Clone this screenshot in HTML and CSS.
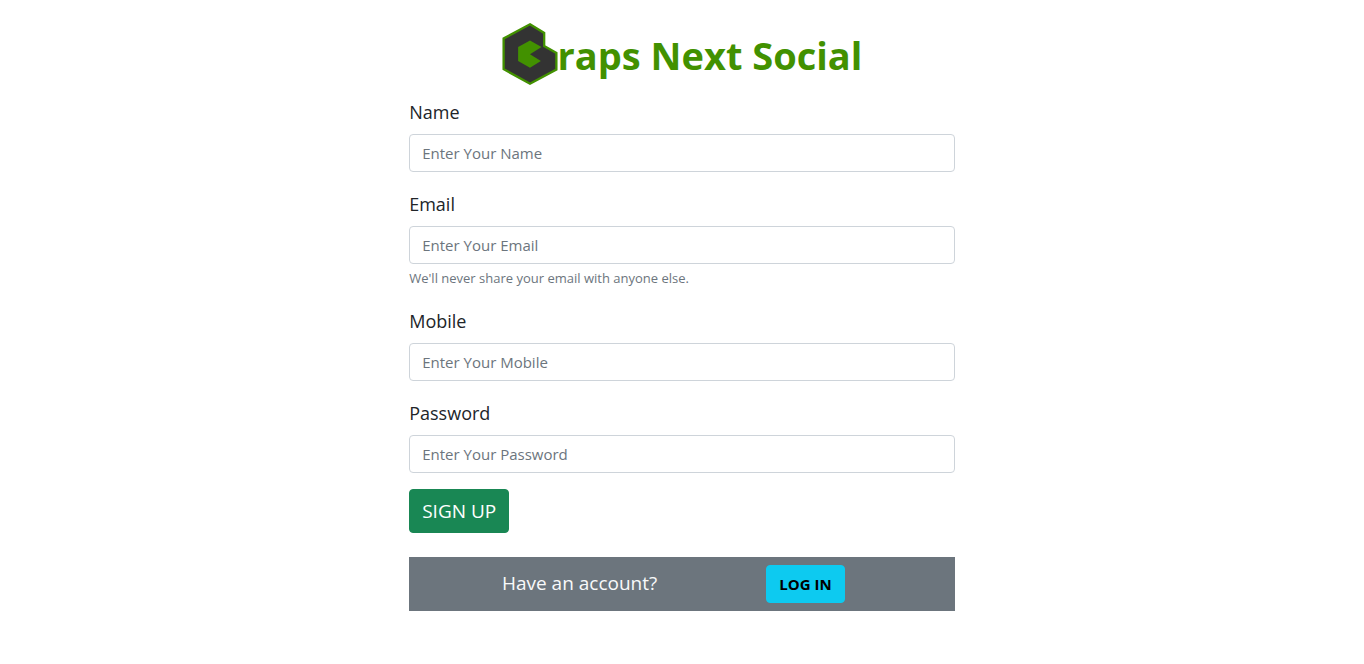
FILE: index.html
```html
<!DOCTYPE html>
<html lang="en">
<head>
  <meta charset="utf-8">
  <meta name="viewport" content="width=device-width, initial-scale=1">
  <title>Graps Next Social</title>
  <link rel="stylesheet" href="styles.css">
</head>
<body>
  <main class="signup">
    <h1 class="brand">
      <svg class="brand-logo" viewBox="24 22 166 188" role="img" aria-label="G">
        <path d="M107 26 150 52V92L187 113V163L107 206 27 162V69Z" fill="#333" stroke="#429100" stroke-width="7"/>
        <path d="M107 75 142 95 107 117 140 137 107 158 71 137V95Z" fill="#429100"/>
      </svg>
      <span class="brand-name">raps Next Social</span>
    </h1>
    <form class="form">
      <div class="field">
        <label class="label" for="name">Name</label>
        <input class="input" id="name" type="text" placeholder="Enter Your Name">
      </div>
      <div class="field">
        <label class="label" for="email">Email</label>
        <input class="input" id="email" type="email" placeholder="Enter Your Email" aria-describedby="email-help">
        <div class="help" id="email-help">We'll never share your email with anyone else.</div>
      </div>
      <div class="field">
        <label class="label" for="mobile">Mobile</label>
        <input class="input" id="mobile" type="tel" placeholder="Enter Your Mobile">
      </div>
      <div class="field">
        <label class="label" for="password">Password</label>
        <input class="input" id="password" type="password" placeholder="Enter Your Password">
      </div>
      <button class="button button-signup" type="submit">SIGN UP</button>
    </form>
    <div class="account">
      <span class="account-text">Have an account?</span>
      <button class="button button-login" type="button">LOG IN</button>
    </div>
  </main>
</body>
</html>
```
FILE: styles.css
```css
* {
  box-sizing: border-box;
}

body {
  margin: 0;
  background: #fff;
  color: #212529;
  font-family: "Open Sans", "Noto Sans", sans-serif;
  font-size: 15px;
  line-height: 24px;
}

.signup {
  width: 40%;
  min-width: 400px;
  margin: 0 auto;
  padding: 23px 0;
}

.brand {
  display: flex;
  align-items: center;
  justify-content: center;
  margin: 0 0 11px;
  color: #429100;
  font-size: 38px;
  line-height: 48px;
}

.brand-logo {
  width: 56px;
  height: 62px;
}

.brand-name {
  padding-top: 2px;
  white-space: nowrap;
}

.field {
  margin-bottom: 16px;
}

.label {
  display: block;
  margin-bottom: 6px;
  font-size: 18px;
  line-height: 32px;
}

.input {
  display: block;
  width: 100%;
  height: 38px;
  padding: 6px 12px;
  border: 1px solid #ced4da;
  border-radius: 4px;
  background: #fff;
  color: #212529;
  font: inherit;
}

.input::placeholder {
  color: #6c757d;
  opacity: 1;
}

.help {
  padding-top: 4px;
  color: #6c757d;
  font-size: 13px;
  line-height: 21px;
}

.button {
  display: block;
  padding: 6px 12px;
  border: 1px solid;
  border-radius: 4px;
  font-family: inherit;
  white-space: nowrap;
  cursor: pointer;
}

.button-signup {
  border-color: #198754;
  background: #198754;
  color: #fff;
  font-size: 19px;
  line-height: 30px;
}

.button-login {
  margin-left: 20%;
  border-color: #0dcaf0;
  background: #0dcaf0;
  color: #000;
  font-size: 15px;
  font-weight: 700;
  line-height: 24px;
}

.account {
  display: flex;
  align-items: flex-start;
  margin-top: 24px;
  padding: 8px 0;
  background: #6c757d;
}

.account-text {
  margin-left: 17%;
  color: #f8f9fa;
  font-size: 19px;
  line-height: 36px;
  white-space: nowrap;
}
```
